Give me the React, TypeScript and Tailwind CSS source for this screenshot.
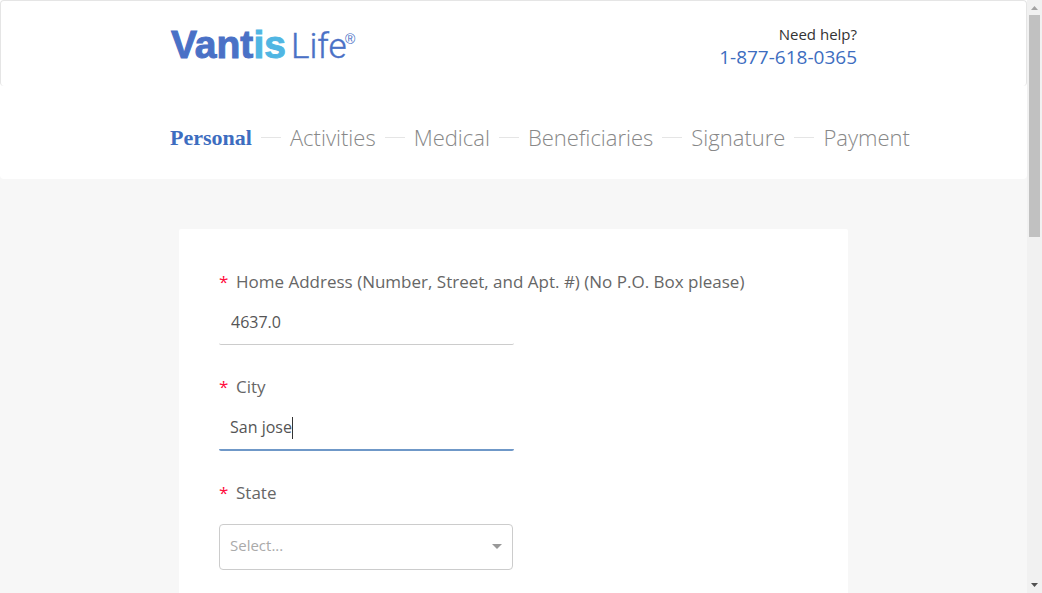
import React from "react";

const steps = ["Activities", "Medical", "Beneficiaries", "Signature", "Payment"];

function Logo() {
  return (
    <a href="#home" aria-label="Vantis Life" className="block">
      <svg width="200" height="60" viewBox="0 0 200 60">
        <text
          x="1"
          y="43"
          fill="#4a71c6"
          stroke="#4a71c6"
          strokeWidth="1"
          fontFamily="'Liberation Sans', Arial, sans-serif"
          fontSize="39"
          fontWeight="700"
        >
          Vant
          <tspan fill="#50b6e3" stroke="#50b6e3">is</tspan>
        </text>
        <text
          x="121"
          y="43"
          fill="#4a71c6"
          stroke="#4a71c6"
          strokeWidth="0.4"
          fontFamily="Roboto, sans-serif"
          fontSize="35"
          fontWeight="300"
        >
          Life
        </text>
        <text x="175" y="29" fill="#4a71c6" fontFamily="'Liberation Sans', sans-serif" fontSize="14">
          ®
        </text>
      </svg>
    </a>
  );
}

function FieldLabel({ htmlFor, children }: { htmlFor: string; children: React.ReactNode }) {
  return (
    <label htmlFor={htmlFor} className="flex h-7 items-center gap-[9px] text-[17px] text-[#666]">
      <span className="w-2 text-[#ff0a3c]">*</span>
      <span>{children}</span>
    </label>
  );
}

function ScrollBar() {
  return (
    <div aria-hidden="true" className="flex w-[15px] shrink-0 flex-col items-center justify-between bg-[#f1f1f1]">
      <div className="flex flex-col items-center">
        <svg width="15" height="15" viewBox="0 0 15 15">
          <path d="M4 10h7L7.500 6z" fill="#a3a3a3" />
        </svg>
        <div className="h-[222px] w-[11px] bg-[#c1c1c1]" />
      </div>
      <svg width="15" height="15" viewBox="0 0 15 15">
        <path d="M4 5h7L7.500 9z" fill="#505050" />
      </svg>
    </div>
  );
}

export default function App() {
  return (
    <div className="flex h-screen overflow-hidden bg-[#f7f7f7] font-['Open_Sans',sans-serif]">
      <div className="min-w-0 flex-1">
        <header className="rounded-b bg-white">
          <div className="h-[86px] rounded border border-b-0 border-[#e5e5e5]">
            <div className="mx-auto flex max-w-[687px] justify-between pt-[14px]">
              <Logo />
              <div className="pt-2 text-right text-[#333]">
                <p className="text-[15px] leading-[22px]">Need help?</p>
                <a href="tel:1-877-618-0365" className="block text-[19px] leading-6 text-[#3d6dc0]">
                  1-877-618-0365
                </a>
              </div>
            </div>
          </div>
          <nav aria-label="Application steps" className="mx-auto h-[93px] max-w-[687px] pt-[34px]">
            <ol className="flex items-center gap-[9px] text-[22px] leading-8 font-light whitespace-nowrap text-[#888]">
              <li>
                <a href="#personal" aria-current="step" className="font-['Liberation_Serif',serif] font-bold text-[#3d6dc0]">
                  Personal
                </a>
              </li>
              {steps.map((step) => (
                <li key={step} className="flex items-center gap-[9px]">
                  <span className="h-px w-5 bg-[#e5e5e5]" />
                  <a href={"#" + step.toLowerCase()}>{step}</a>
                </li>
              ))}
            </ol>
          </nav>
        </header>
        <main className="mx-auto mt-[50px] max-w-[669px] rounded-xs bg-white px-10 pt-[39px] pb-10">
          <form className="flex flex-col">
            <FieldLabel htmlFor="address">Home Address (Number, Street, and Apt. #) (No P.O. Box please)</FieldLabel>
            <input
              id="address"
              defaultValue="4637.0"
              className="mt-[5px] mb-7 h-11 w-[295px] rounded-xs border-b border-[#ccc] px-3 pb-px text-base text-[#555] outline-none"
            />
            <FieldLabel htmlFor="city">City</FieldLabel>
            <div className="relative mt-[5px] mb-7 w-[295px]">
              <input
                id="city"
                defaultValue="San jose"
                className="block h-[45px] w-full rounded-xs border-b-2 border-[#6f98c8] px-[11px] pb-px text-base text-[#555] caret-transparent outline-none"
              />
              <span className="absolute top-[11px] left-[73px] h-[22px] w-px bg-[#333]" />
            </div>
            <FieldLabel htmlFor="state">State</FieldLabel>
            <div className="relative mt-[17px] w-[294px]">
              <select
                id="state"
                defaultValue=""
                className="block h-[46px] w-full appearance-none rounded border border-[#ccc] bg-white px-[10px] pb-1 text-[15px] text-[#aaa] outline-none"
              >
                <option value="">Select...</option>
                <option value="CA">California</option>
                <option value="CT">Connecticut</option>
              </select>
              <svg width="10" height="5" viewBox="0 0 10 5" className="pointer-events-none absolute top-5 right-[11px]">
                <path d="M0 0h10L5 5z" fill="#999" />
              </svg>
            </div>
          </form>
        </main>
      </div>
      <ScrollBar />
    </div>
  );
}
